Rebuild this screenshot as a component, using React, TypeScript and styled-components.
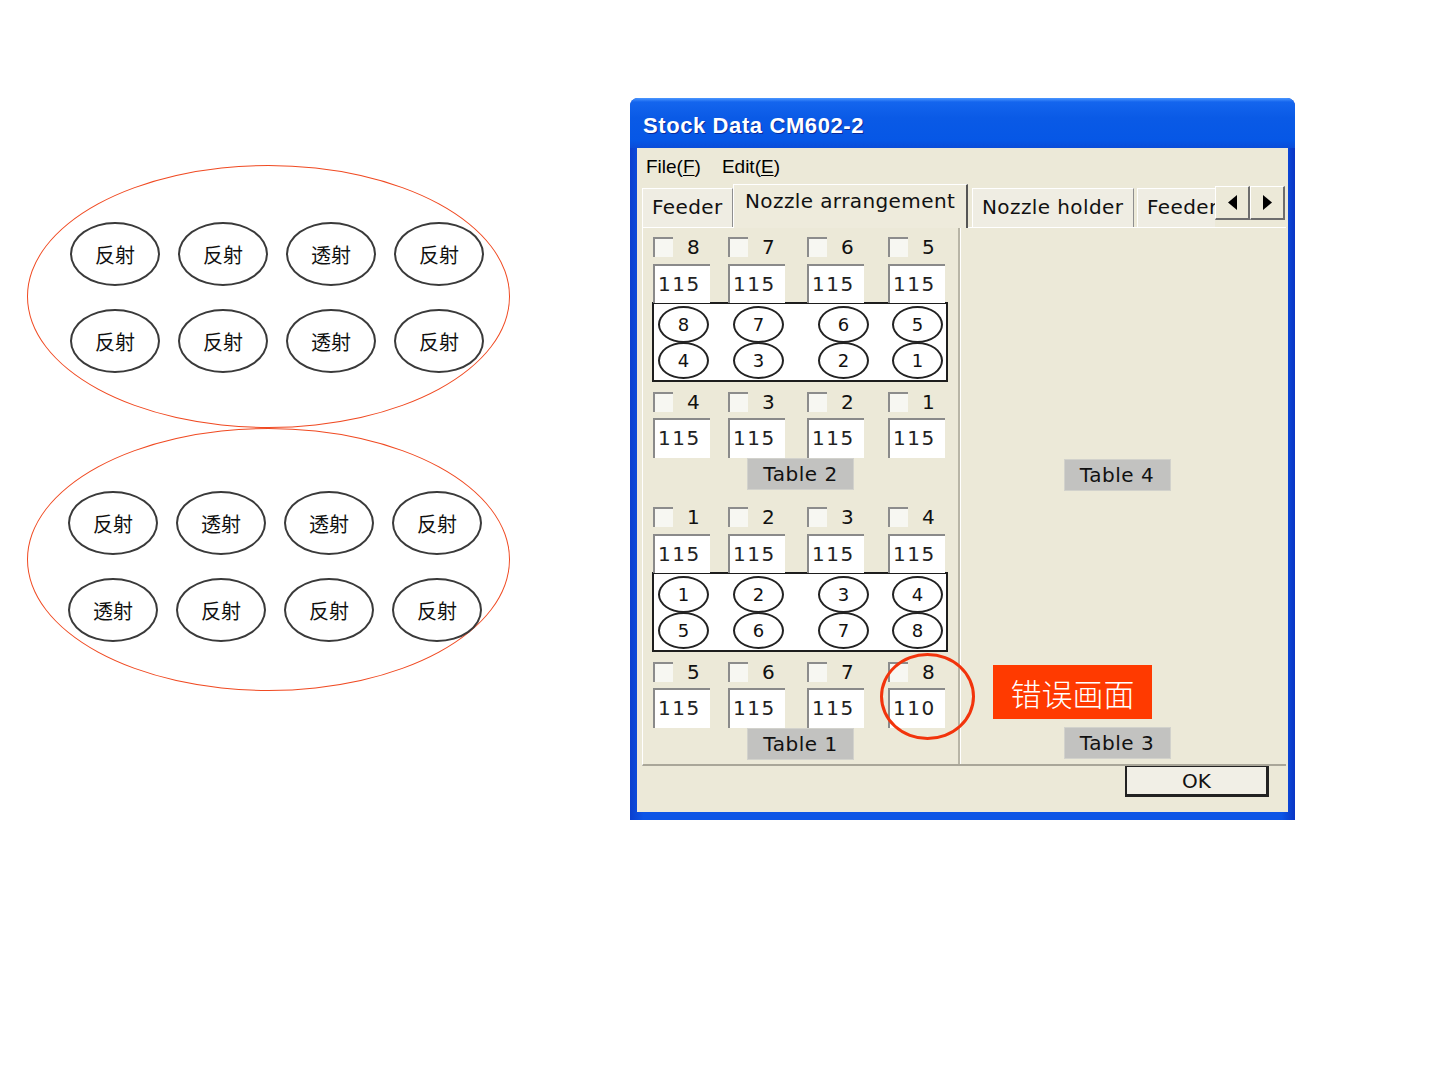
import React from 'react'
import styled, { createGlobalStyle } from 'styled-components'

const GlobalStyle = createGlobalStyle`
  html, body { margin: 0; padding: 0; background: #fff; }
  body { width: 1440px; height: 1080px; overflow: hidden; font-family: "DejaVu Sans", sans-serif; }
`

const Page = styled.div`
  display: flex;
  align-items: flex-start;
  width: 1440px;
  height: 1080px;
`

// left sketch: two red outlines with 8 lamps each
const Drawing = styled.div`
  display: flex;
  flex-direction: column;
  margin: 165px 0 0 27px;
`

const Outline = styled.div<{ $top: number; $left: number }>`
  box-sizing: border-box;
  width: 483px;
  height: 263px;
  border: 1.5px solid #f04a22;
  border-radius: 50%;
  padding: ${p => p.$top}px 0 0 ${p => p.$left}px;
`

const Lamps = styled.div`
  display: grid;
  grid-template-columns: repeat(4, 90px);
  grid-auto-rows: 64px;
  column-gap: 18px;
  row-gap: 23px;
`

const Lamp = styled.div`
  box-sizing: border-box;
  border: 2px solid #3a3a3a;
  border-radius: 50%;
  display: flex;
  align-items: center;
  justify-content: center;
  font-family: "Noto Sans CJK SC", sans-serif;
  font-size: 20px;
  color: #111;
`

// XP window
const Window = styled.div`
  margin: 98px 0 0 120px;
  width: 665px;
  height: 722px;
  display: flex;
  flex-direction: column;
  border-radius: 8px 8px 0 0;
  background: linear-gradient(to right, #0a3fce 0%, #0d55e6 2%, #0d55e6 98%, #0935c4 100%);
  overflow: hidden;
`

const TitleBar = styled.div`
  height: 50px;
  box-sizing: border-box;
  display: flex;
  align-items: center;
  padding: 6px 0 0 13px;
  background: linear-gradient(to bottom, #4a97ff 0%, #1465ee 8%, #0a5ae6 40%, #0657e6 85%, #0a4cd8 100%);
  color: #fff;
  font-family: "Liberation Sans", sans-serif;
  font-weight: bold;
  font-size: 22px;
  letter-spacing: 0.6px;
  text-shadow: 1px 1px 0 #0b2a9a;
`

const Client = styled.div`
  flex: 1;
  margin: 0 7px 8px 7px;
  background: #ece9d8;
  display: flex;
  flex-direction: column;
`

const MenuBar = styled.div`
  height: 37px;
  box-sizing: border-box;
  display: flex;
  align-items: center;
  gap: 21px;
  padding: 0 0 0 9px;
  font-family: "Liberation Sans", sans-serif;
  font-size: 19px;
  color: #000;
  u { text-decoration: underline; text-underline-offset: 2px; }
`

const TabStrip = styled.div`
  height: 42px;
  display: flex;
  align-items: flex-end;
  padding-left: 5px;
  position: relative;
  z-index: 1;
`

const Tab = styled.div<{ $w: number; $active?: boolean; $clip?: boolean; $gap?: number }>`
  box-sizing: border-box;
  width: ${p => p.$w}px;
  height: ${p => (p.$active ? 44 : 39)}px;
  margin-bottom: ${p => (p.$active ? -1 : 0)}px;
  margin-right: ${p => p.$gap ?? 0}px;
  padding: ${p => (p.$active ? '4px 0 0 11px' : '6px 0 0 9px')};
  background: ${p => (p.$active ? '#eeebdc' : '#efede3')};
  border-top: 1px solid #fff;
  border-left: 1px solid #fff;
  border-right: ${p => (p.$clip ? 'none' : p.$active ? '2px solid #555' : '1px solid #8f8f8f')};
  font-size: 20px;
  letter-spacing: 0.4px;
  color: #111;
  white-space: nowrap;
  overflow: hidden;
`

const Scroller = styled.div`
  display: flex;
  align-self: flex-start;
  margin-top: 1px;
`

const ArrowBtn = styled.div`
  box-sizing: border-box;
  width: 35px;
  height: 34px;
  display: flex;
  align-items: center;
  justify-content: center;
  background: #ece9d8;
  border-top: 1px solid #fff;
  border-left: 1px solid #fff;
  border-right: 2px solid #6d6d6d;
  border-bottom: 2px solid #6d6d6d;
`

const Panel = styled.div`
  position: relative;
  height: 539px;
  box-sizing: border-box;
  margin: 0 2px 0 5px;
  display: grid;
  grid-template-columns: 317px 1fr;
  border-top: 1px solid #fff;
  border-left: 1px solid #fff;
  border-bottom: 2px solid #a9a699;
`

const LeftPane = styled.div`
  box-sizing: border-box;
  padding: 9px 0 0 9px;
  border-right: 2px solid #b8b5a6;
  box-shadow: 1px 0 0 #fff;
  display: flex;
  flex-direction: column;
`

const Group = styled.div`
  display: flex;
  flex-direction: column;
  align-items: flex-start;
  & + & { margin-top: 17px; }
`

const Row = styled.div<{ $gap?: number }>`
  display: grid;
  grid-template-columns: 75px 79px 81px 58px;
  margin-top: ${p => p.$gap ?? 0}px;
  margin-left: 1px;
  position: relative;
  z-index: 1;
`

const Check = styled.div`
  height: 20px;
  display: flex;
  align-items: center;
  gap: 14px;
  font-size: 20px;
  color: #111;
`

const CheckBox = styled.span`
  width: 20px;
  height: 20px;
  box-sizing: border-box;
  background: #f7f7f2;
  border-top: 2px solid #8c8c8c;
  border-left: 2px solid #8c8c8c;
`

const Field = styled.div<{ $h: number }>`
  box-sizing: border-box;
  width: 57px;
  height: ${p => p.$h}px;
  background: #fff;
  border-top: 2px solid #8a8a8a;
  border-left: 2px solid #8a8a8a;
  padding: 6px 0 0 3px;
  font-size: 20px;
  letter-spacing: 1.5px;
  color: #222;
`

const NozzleBox = styled.div`
  box-sizing: border-box;
  width: 296px;
  height: 80px;
  margin-top: -1px;
  background: #fff;
  border: 2px solid #1e1e1e;
  padding: 2px 0 0 4px;
  display: grid;
  grid-template-columns: 75px 85px 74px 52px;
  grid-template-rows: 36px 36px;
`

const Nozzle = styled.div`
  box-sizing: border-box;
  width: 51px;
  height: 37px;
  border: 2px solid #222;
  border-radius: 50%;
  display: flex;
  align-items: center;
  justify-content: center;
  font-size: 18px;
  color: #111;
`

const TableTag = styled.div<{ $indent?: number; $gap?: number }>`
  box-sizing: border-box;
  width: 107px;
  height: 32px;
  margin-left: ${p => p.$indent ?? 0}px;
  margin-top: ${p => p.$gap ?? 0}px;
  display: flex;
  align-items: center;
  justify-content: center;
  background: #c2c2c0;
  border: 1px solid #d2d2cc;
  font-size: 20px;
  letter-spacing: 0.5px;
  color: #111;
`

const RightPane = styled.div`
  display: flex;
  flex-direction: column;
  align-items: center;
  padding: 231px 12px 0 0;
`

const Note = styled.div`
  align-self: flex-start;
  margin: 174px 0 0 33px;
  width: 159px;
  height: 54px;
  background: #ff3a00;
  color: #fff;
  display: flex;
  align-items: center;
  justify-content: center;
  font-family: "Noto Sans CJK SC", serif;
  font-weight: 300;
  font-size: 31px;
`

const Mark = styled.div`
  position: absolute;
  left: 237px;
  top: 425px;
  width: 95px;
  height: 87px;
  box-sizing: border-box;
  border: 3px solid #f2340c;
  border-radius: 50%;
  z-index: 2;
`

const Footer = styled.div`
  flex: 1;
  display: flex;
  justify-content: flex-end;
  align-items: flex-start;
  padding-right: 19px;
`

const OkButton = styled.div`
  box-sizing: border-box;
  width: 144px;
  height: 32px;
  margin-top: -1px;
  display: flex;
  align-items: center;
  justify-content: center;
  background: #f1efe6;
  border: 2px solid #222;
  border-right-width: 3px;
  border-bottom-width: 3px;
  font-size: 20px;
  color: #111;
`

const topLamps = ['反射', '反射', '透射', '反射', '反射', '反射', '透射', '反射']
const bottomLamps = ['反射', '透射', '透射', '反射', '透射', '反射', '反射', '反射']

type GroupData = {
  top: string[]
  topValues: string[]
  nozzles: string[]
  bottom: string[]
  bottomValues: string[]
  name: string
}

const groups: GroupData[] = [
  {
    top: ['8', '7', '6', '5'],
    topValues: ['115', '115', '115', '115'],
    nozzles: ['8', '7', '6', '5', '4', '3', '2', '1'],
    bottom: ['4', '3', '2', '1'],
    bottomValues: ['115', '115', '115', '115'],
    name: 'Table 2',
  },
  {
    top: ['1', '2', '3', '4'],
    topValues: ['115', '115', '115', '115'],
    nozzles: ['1', '2', '3', '4', '5', '6', '7', '8'],
    bottom: ['5', '6', '7', '8'],
    bottomValues: ['115', '115', '115', '110'],
    name: 'Table 1',
  },
]

const Arrow = ({ dir }: { dir: 'l' | 'r' }) => (
  <svg width="9" height="15" viewBox="0 0 9 15">
    {dir === 'l' ? <polygon points="9,0 9,15 0,7.5" fill="#000" /> : <polygon points="0,0 0,15 9,7.5" fill="#000" />}
  </svg>
)

const TableGroup = ({ g }: { g: GroupData }) => (
  <Group>
    <Row>
      {g.top.map(n => (
        <Check key={n}><CheckBox />{n}</Check>
      ))}
    </Row>
    <Row $gap={7}>
      {g.topValues.map((v, i) => (
        <Field key={i} $h={39}>{v}</Field>
      ))}
    </Row>
    <NozzleBox>
      {g.nozzles.map(n => (
        <Nozzle key={n}>{n}</Nozzle>
      ))}
    </NozzleBox>
    <Row $gap={10}>
      {g.bottom.map(n => (
        <Check key={n}><CheckBox />{n}</Check>
      ))}
    </Row>
    <Row $gap={6}>
      {g.bottomValues.map((v, i) => (
        <Field key={i} $h={40}>{v}</Field>
      ))}
    </Row>
    <TableTag $indent={95}>{g.name}</TableTag>
  </Group>
)

export default function App() {
  return (
    <Page>
      <GlobalStyle />
      <Drawing>
        <Outline $top={56} $left={42}>
          <Lamps>
            {topLamps.map((t, i) => <Lamp key={i}>{t}</Lamp>)}
          </Lamps>
        </Outline>
        <Outline $top={62} $left={40}>
          <Lamps>
            {bottomLamps.map((t, i) => <Lamp key={i}>{t}</Lamp>)}
          </Lamps>
        </Outline>
      </Drawing>

      <Window>
        <TitleBar>Stock Data CM602-2</TitleBar>
        <Client>
          <MenuBar>
            <span>File(<u>F</u>)</span>
            <span>Edit(<u>E</u>)</span>
          </MenuBar>
          <TabStrip>
            <Tab $w={91}>Feeder</Tab>
            <Tab $w={235} $active $gap={4}>Nozzle arrangement</Tab>
            <Tab $w={162} $gap={3}>Nozzle holder</Tab>
            <Tab $w={78} $clip>Feeder</Tab>
            <Scroller>
              <ArrowBtn><Arrow dir="l" /></ArrowBtn>
              <ArrowBtn><Arrow dir="r" /></ArrowBtn>
            </Scroller>
          </TabStrip>
          <Panel>
            <LeftPane>
              {groups.map(g => <TableGroup key={g.name} g={g} />)}
            </LeftPane>
            <RightPane>
              <TableTag>Table 4</TableTag>
              <Note>错误画面</Note>
              <TableTag $gap={8}>Table 3</TableTag>
            </RightPane>
            <Mark />
          </Panel>
          <Footer>
            <OkButton>OK</OkButton>
          </Footer>
        </Client>
      </Window>
    </Page>
  )
}
